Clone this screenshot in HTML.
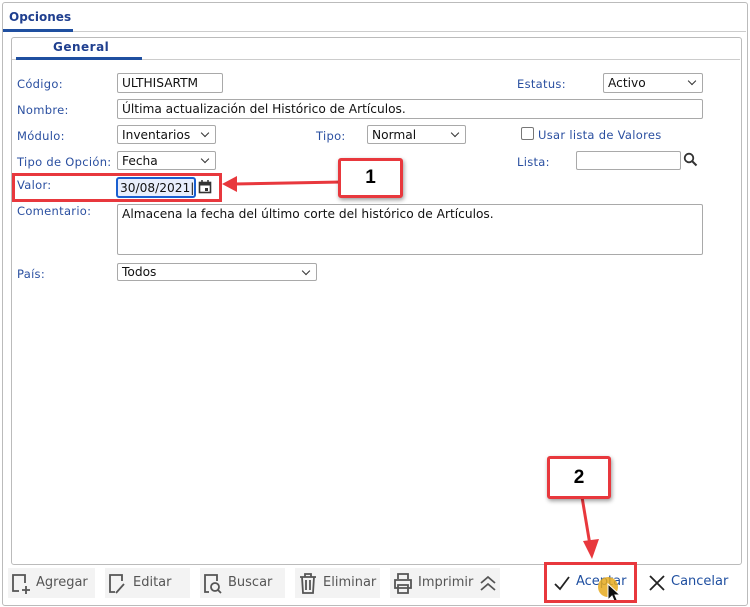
<html><head><style>
body{margin:0;width:750px;height:607px;background:#fff;font-family:"DejaVu Sans","Liberation Sans",sans-serif;position:relative;overflow:hidden}
.a{position:absolute}
.l{position:absolute;font-size:11.5px;color:#2a4fa0;letter-spacing:.3px;margin-top:1px}
.i{position:absolute;border:1px solid #a9a9a9;border-radius:2px;background:#fff;font-size:12.2px;color:#111;box-sizing:border-box;padding:1px 4px;line-height:16px;white-space:nowrap;overflow:hidden}
.s:after{content:"";position:absolute;right:7px;top:4px;width:5px;height:5px;border-right:1.5px solid #333;border-bottom:1.5px solid #333;transform:rotate(45deg)}
.b{position:absolute;top:568px;height:30px;background:#f3f3f3;font-size:13px;color:#555;line-height:30px;box-sizing:border-box;padding-left:28px}
.rb{position:absolute;border:3px solid #e8383d;border-radius:3px;box-sizing:border-box;box-shadow:1px 2px 4px rgba(0,0,0,.4);background:#fff;font:bold 19px "Liberation Sans",sans-serif;text-align:center}
</style></head><body>
<div class="a" style="left:2px;top:2px;width:744px;height:602px;border:1px solid #bbb;border-radius:3px"></div>
<div class="a" style="left:3px;top:31px;width:743px;border-top:1px solid #ccc"></div>
<div class="a" style="left:9px;top:10px;font-size:12px;font-weight:bold;color:#1f3f8f">Opciones</div>
<div class="a" style="left:3px;top:29px;width:70px;height:3px;background:#1f4fa0"></div>
<div class="a" style="left:11px;top:37px;width:729px;height:526px;border:1px solid #bbb;border-radius:3px"></div>
<div class="a" style="left:12px;top:59px;width:728px;border-top:1px solid #ccc"></div>
<div class="a" style="left:53px;top:40px;font-size:12px;font-weight:bold;color:#1f3f8f;letter-spacing:.5px">General</div>
<div class="a" style="left:16px;top:57px;width:126px;height:3px;background:#1f4fa0"></div>

<div class="l" style="left:17px;top:76px">Código:</div>
<div class="i" style="left:117px;top:73px;width:106px;height:20px">ULTHISARTM</div>
<div class="l" style="left:517px;top:76px">Estatus:</div>
<div class="i s" style="left:603px;top:73px;width:100px;height:20px">Activo</div>
<div class="l" style="left:17px;top:102px">Nombre:</div>
<div class="i" style="left:117px;top:99px;width:586px;height:20px">Última actualización del Histórico de Artículos.</div>
<div class="l" style="left:17px;top:128px">Módulo:</div>
<div class="i s" style="left:117px;top:125px;width:99px;height:19px">Inventarios</div>
<div class="l" style="left:316px;top:128px">Tipo:</div>
<div class="i s" style="left:367px;top:125px;width:99px;height:19px">Normal</div>
<div class="a" style="left:521px;top:127px;width:13px;height:13px;border:1.5px solid #777;border-radius:2px;box-sizing:border-box"></div>
<div class="l" style="left:538px;top:127px">Usar lista de Valores</div>
<div class="l" style="left:17px;top:154px">Tipo de Opción:</div>
<div class="i s" style="left:117px;top:151px;width:99px;height:19px">Fecha</div>
<div class="l" style="left:517px;top:154px">Lista:</div>
<div class="i" style="left:576px;top:151px;width:105px;height:19px"></div>
<svg class="a" style="left:683px;top:152px" width="15" height="15"><circle cx="6" cy="6" r="4.3" fill="none" stroke="#333" stroke-width="1.8"/><path d="M9 9l4.5 4.5" stroke="#333" stroke-width="2"/></svg>

<div class="a" style="left:12px;top:173px;width:210px;height:29px;border:3px solid #e8383d;box-sizing:border-box"></div>
<div class="l" style="left:17px;top:177px">Valor:</div>
<div class="i" style="left:116px;top:177px;width:80px;height:21px;border:2px solid #1a5fd0;background:#e8eefc;border-radius:3px;padding:1px 2px">30/08/2021|</div>
<svg class="a" style="left:198px;top:180px" width="14" height="14"><rect x="1.5" y="2.5" width="11" height="10" fill="none" stroke="#333" stroke-width="1.6"/><rect x="1.5" y="2.5" width="11" height="3" fill="#333"/><rect x="7" y="8" width="3" height="3" fill="#333"/><path d="M4 0v3M10 0v3" stroke="#333" stroke-width="1.5"/></svg>
<svg class="a" style="left:220px;top:170px" width="125" height="25"><path d="M122 12L14 14" stroke="#e8383d" stroke-width="3"/><path d="M2 14l15-8v16z" fill="#e8383d"/></svg>
<div class="rb" style="left:338px;top:158px;width:65px;height:40px;line-height:34px">1</div>

<div class="l" style="left:17px;top:203px">Comentario:</div>
<div class="i" style="left:117px;top:204px;width:586px;height:51px">Almacena la fecha del último corte del histórico de Artículos.</div>
<div class="l" style="left:17px;top:266px">País:</div>
<div class="i s" style="left:117px;top:263px;width:200px;height:18px;line-height:14px">Todos</div>

<div class="b" style="left:8px;width:87px">Agregar</div>
<div class="b" style="left:105px;width:85px">Editar</div>
<div class="b" style="left:200px;width:85px">Buscar</div>
<div class="b" style="left:295px;width:85px">Eliminar</div>
<div class="b" style="left:390px;width:85px">Imprimir</div>
<div class="b" style="left:475px;width:25px;padding:0"></div>
<svg class="a" style="left:10px;top:572px" width="24" height="24" fill="none" stroke="#555" stroke-width="1.8"><path d="M9 19H3V3h12v8"/><path d="M16 14v8M12 18h8"/></svg>
<svg class="a" style="left:107px;top:572px" width="24" height="24" fill="none" stroke="#555" stroke-width="1.8"><path d="M8 20H3V3h12v6"/><path d="M9 21l8-9"/></svg>
<svg class="a" style="left:202px;top:572px" width="24" height="24" fill="none" stroke="#555" stroke-width="1.8"><path d="M7 20H3V3h12v6"/><circle cx="13" cy="15" r="4"/><path d="M16 18l3 3"/></svg>
<svg class="a" style="left:297px;top:572px" width="24" height="24" fill="none" stroke="#555" stroke-width="1.8"><path d="M3 5h16M8 5V2h6v3M5 5l1 16h10l1-16M9 8v10M13 8v10"/></svg>
<svg class="a" style="left:392px;top:572px" width="24" height="24" fill="none" stroke="#555" stroke-width="1.8"><path d="M6 7V2h10v5M3 8h16v8H3zM6 13h10v8H6z"/></svg>
<svg class="a" style="left:478px;top:573px" width="20" height="20" fill="none" stroke="#555" stroke-width="1.8"><path d="M3 10l7-6 7 6M3 17l7-6 7 6"/></svg>

<svg class="a" style="left:553px;top:574px" width="18" height="18" fill="none" stroke="#222" stroke-width="1.8"><path d="M2 10l5 5L16 3"/></svg>
<div class="a" style="left:576px;top:574px;font-size:13px;color:#1f4fa0">Aceptar</div>
<div class="a" style="left:598px;top:577px;width:20px;height:20px;border-radius:50%;background:rgba(230,170,30,.85)"></div>
<svg class="a" style="left:607px;top:583px" width="14" height="22"><path d="M1 1v16l4-4 3 7 3-1-3-7h5z" fill="#111" stroke="#fff"/></svg>
<svg class="a" style="left:648px;top:574px" width="18" height="18" fill="none" stroke="#222" stroke-width="1.8"><path d="M2 2l14 14M16 2L2 16"/></svg>
<div class="a" style="left:671px;top:574px;font-size:13px;color:#1f4fa0">Cancelar</div>
<div class="a" style="left:544px;top:562px;width:93px;height:41px;border:3px solid #e8383d;box-sizing:border-box"></div>

<svg class="a" style="left:570px;top:495px" width="35" height="70"><path d="M12 2L20 50" stroke="#e8383d" stroke-width="3"/><path d="M13 46l9 18 7-20z" fill="#e8383d"/></svg>
<div class="rb" style="left:547px;top:456px;width:64px;height:43px;line-height:37px">2</div>
</body></html>
